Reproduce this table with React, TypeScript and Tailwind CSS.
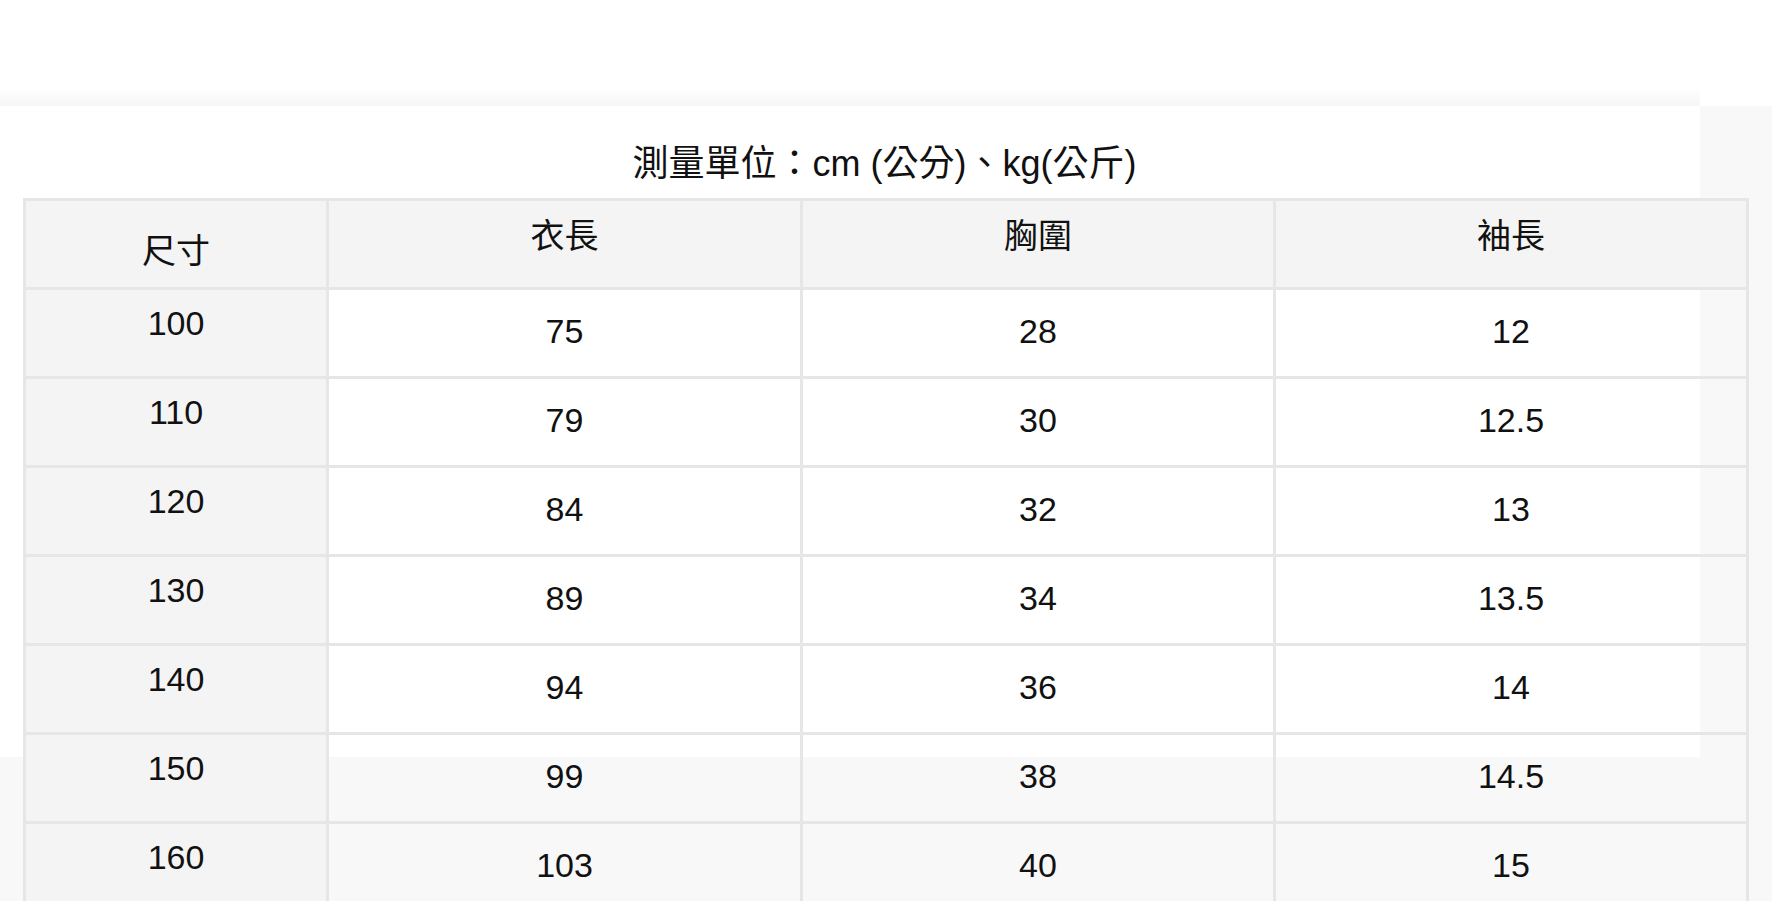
import React from "react";

const rows = [
  { size: "100", length: "75", chest: "28", sleeve: "12" },
  { size: "110", length: "79", chest: "30", sleeve: "12.5" },
  { size: "120", length: "84", chest: "32", sleeve: "13" },
  { size: "130", length: "89", chest: "34", sleeve: "13.5" },
  { size: "140", length: "94", chest: "36", sleeve: "14" },
  { size: "150", length: "99", chest: "38", sleeve: "14.5" },
  { size: "160", length: "103", chest: "40", sleeve: "15" },
];

const font = "font-['Liberation_Sans','Noto_Sans_CJK_TC',sans-serif]";

export default function App() {
  return (
    <div className={`min-h-screen bg-[#f8f8f8] text-[#111] ${font}`}>
      {/* Top bar */}
      <div className="h-[106px] w-full bg-white flex flex-col justify-end">
        <div className="h-[18px] w-[1700px] bg-gradient-to-b from-white to-[#f6f6f6]" />
      </div>

      {/* Size chart panel */}
      <div className="w-[1700px] h-[651px] bg-white">
        <div className="w-[1723px] ml-[23px]">
          <h2 className="pt-[36px] pb-[13px] text-center text-[36px] leading-[43px] font-normal">
            測量單位：cm (公分)、kg(公斤)
          </h2>
          <table className="w-[1723px] table-fixed border-collapse text-[34px]">
            <colgroup>
              <col className="w-[303px]" />
              <col className="w-[474px]" />
              <col className="w-[473px]" />
              <col className="w-[473px]" />
            </colgroup>
            <thead>
              <tr className="h-[89px] bg-[#f4f4f4]">
                <th className="border-[3px] border-[#e6e6e6] font-normal pt-[15px] align-middle">尺寸</th>
                <th className="border-[3px] border-[#e6e6e6] font-normal pb-[15px] align-middle">衣長</th>
                <th className="border-[3px] border-[#e6e6e6] font-normal pb-[15px] align-middle">胸圍</th>
                <th className="border-[3px] border-[#e6e6e6] font-normal pb-[15px] align-middle">袖長</th>
              </tr>
            </thead>
            <tbody>
              {rows.map((r) => (
                <tr key={r.size} className="h-[89px]">
                  <td className="border-[3px] border-[#e6e6e6] bg-[#f4f4f4] text-center pb-[19px] align-middle">
                    {r.size}
                  </td>
                  <td className="border-[3px] border-[#e6e6e6] text-center pb-[3px] align-middle">{r.length}</td>
                  <td className="border-[3px] border-[#e6e6e6] text-center pb-[3px] align-middle">{r.chest}</td>
                  <td className="border-[3px] border-[#e6e6e6] text-center pb-[3px] align-middle">{r.sleeve}</td>
                </tr>
              ))}
            </tbody>
          </table>
        </div>
      </div>
    </div>
  );
}
